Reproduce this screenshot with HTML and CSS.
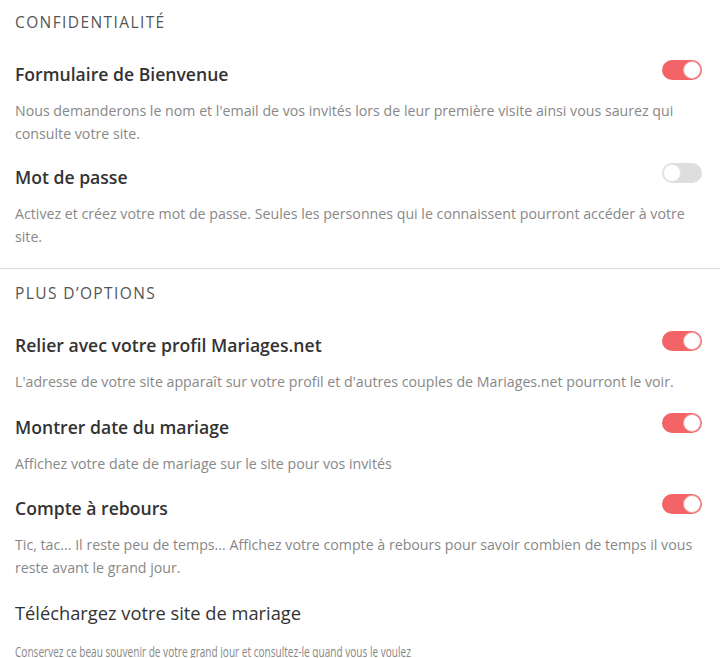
FILE: index.html
```html
<!DOCTYPE html>
<html lang="fr">
<head>
<meta charset="utf-8">
<link rel="stylesheet" href="styles.css">
</head>
<body>
<div class="page">
  <section class="group">
    <h2 class="group-title">CONFIDENTIALITÉ</h2>
    <div class="item">
      <div class="item-head">
        <h3 class="item-title">Formulaire de Bienvenue</h3>
        <span class="toggle on"><span class="knob"></span></span>
      </div>
      <p class="item-desc">Nous demanderons le nom et l'email de vos invités lors de leur première visite ainsi vous saurez qui consulte votre site.</p>
    </div>
    <div class="item">
      <div class="item-head">
        <h3 class="item-title">Mot de passe</h3>
        <span class="toggle off"><span class="knob"></span></span>
      </div>
      <p class="item-desc">Activez et créez votre mot de passe. Seules les personnes qui le connaissent pourront accéder à votre site.</p>
    </div>
  </section>
  <section class="group second">
    <h2 class="group-title">PLUS D’OPTIONS</h2>
    <div class="item">
      <div class="item-head">
        <h3 class="item-title">Relier avec votre profil Mariages.net</h3>
        <span class="toggle on"><span class="knob"></span></span>
      </div>
      <p class="item-desc">L'adresse de votre site apparaît sur votre profil et d'autres couples de Mariages.net pourront le voir.</p>
    </div>
    <div class="item">
      <div class="item-head">
        <h3 class="item-title">Montrer date du mariage</h3>
        <span class="toggle on"><span class="knob"></span></span>
      </div>
      <p class="item-desc">Affichez votre date de mariage sur le site pour vos invités</p>
    </div>
    <div class="item">
      <div class="item-head">
        <h3 class="item-title">Compte à rebours</h3>
        <span class="toggle on"><span class="knob"></span></span>
      </div>
      <p class="item-desc">Tic, tac... Il reste peu de temps... Affichez votre compte à rebours pour savoir combien de temps il vous reste avant le grand jour.</p>
    </div>
    <div class="item last">
      <div class="item-head">
        <h3 class="item-title">Téléchargez votre site de mariage</h3>
      </div>
      <p class="item-desc">Conservez ce beau souvenir de votre grand jour et consultez-le quand vous le voulez</p>
    </div>
  </section>
</div>
</body>
</html>
```
FILE: styles.css
```css
html, body {
  margin: 0;
  padding: 0;
  background: #fff;
}
body {
  font-family: "Open Sans", Lato, sans-serif;
  color: #333;
}
.page {
  width: 720px;
  overflow: hidden;
}
.group {
  padding: 11px 18px 20px 15px;
}
.group.second {
  border-top: 1px solid #dcdcdc;
  padding-top: 13px;
}
.group-title {
  margin: 0;
  font-size: 15.5px;
  font-weight: 400;
  letter-spacing: 1.4px;
  line-height: 22px;
  color: #555;
}
.item {
  margin-top: 20px;
}
.group.second .item {
  margin-top: 21.5px;
}
.group .group-title + .item {
  margin-top: 29px;
}
.item-head {
  display: flex;
  align-items: center;
  justify-content: space-between;
  height: 24px;
}
.item-title {
  margin: 0;
  font-size: 17.6px;
  font-weight: 600;
  line-height: 24px;
  color: #333;
}
.item-desc {
  margin: 13px 0 0;
  font-size: 14.2px;
  line-height: 23px;
  color: #888;
}
.item.last .item-title {
  font-size: 18.3px;
  font-weight: 500;
}
.item.last .item-desc {
  margin-top: 15px;
  transform: scaleX(0.71);
  transform-origin: left center;
  white-space: nowrap;
}
.toggle {
  display: flex;
  align-items: center;
  width: 40px;
  height: 20px;
  border-radius: 10px;
  box-sizing: border-box;
  padding: 1px;
  margin-top: -8px;
}
.toggle.on {
  background: #f26466;
  justify-content: flex-end;
}
.toggle.off {
  background: #dedede;
  justify-content: flex-start;
}
.knob {
  width: 18px;
  height: 18px;
  border-radius: 50%;
  background: #fff;
  box-sizing: border-box;
}
.toggle.on .knob {
  border: 1px solid #f4a0a2;
}
.toggle.off .knob {
  border: 1px solid #e6e6e6;
}
```
